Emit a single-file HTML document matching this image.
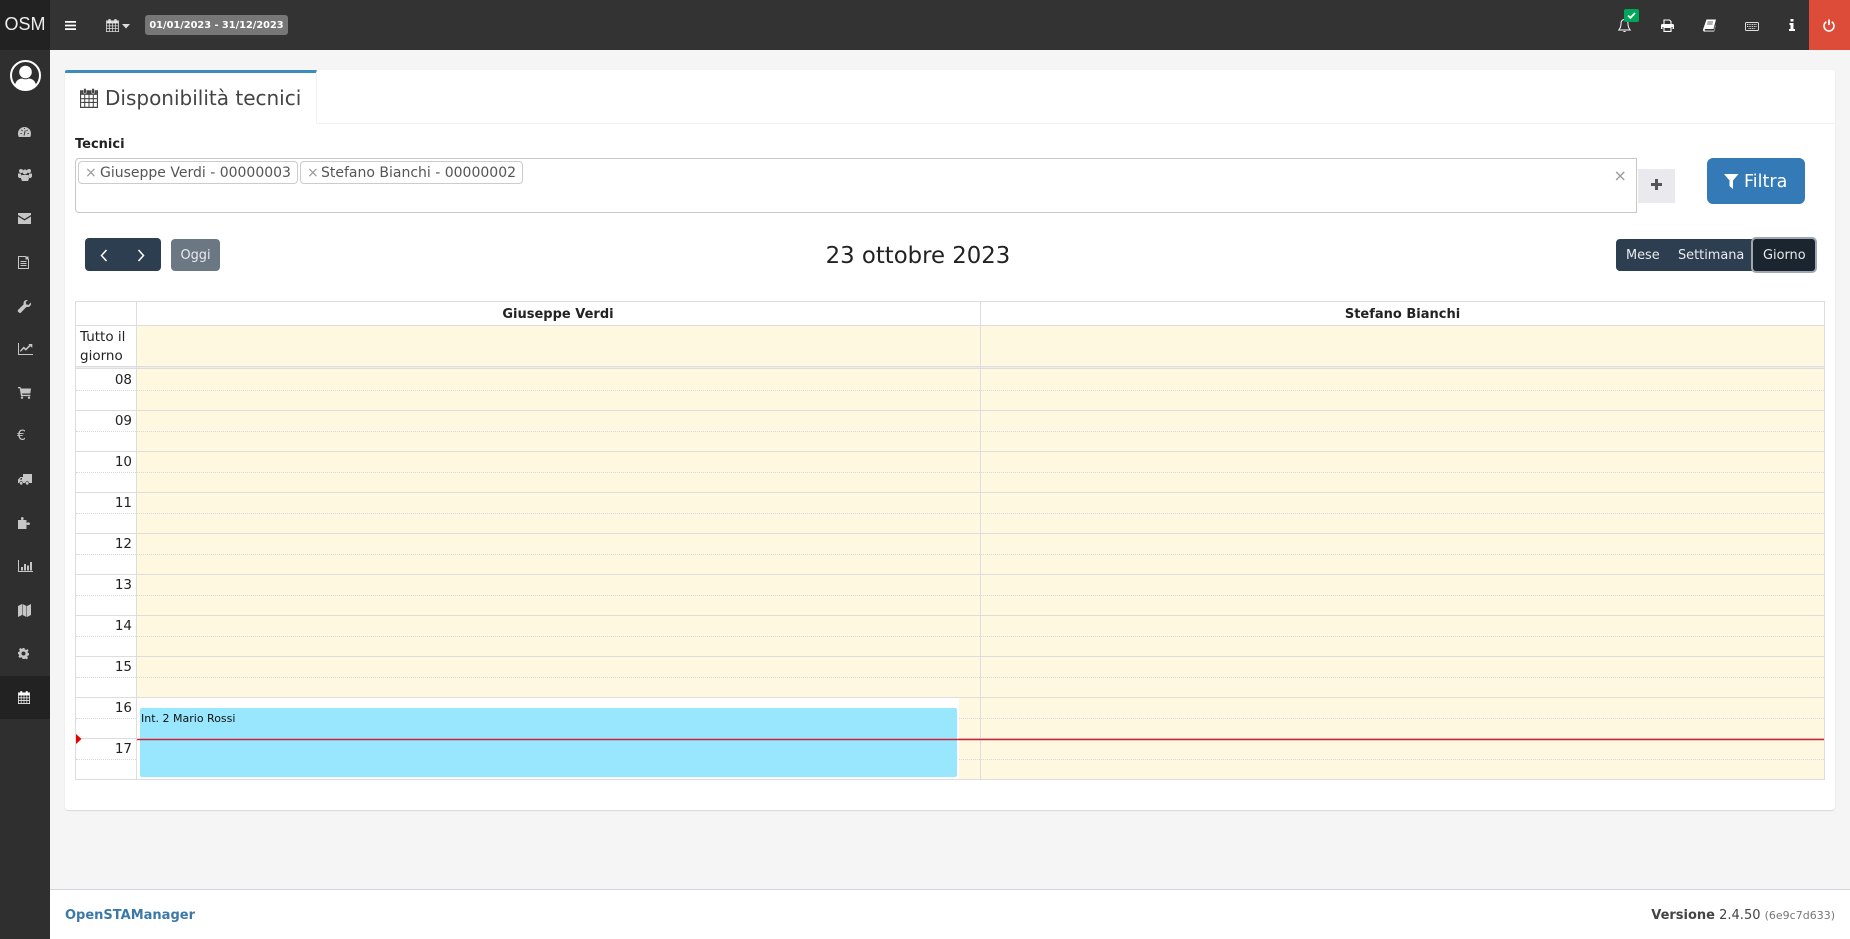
<!DOCTYPE html>
<html lang="it"><head><meta charset="utf-8"><title>Disponibilità tecnici</title>
<style>
*{box-sizing:border-box}
html,body{margin:0;padding:0;width:1850px;height:939px;overflow:hidden;background:#f5f5f5;font-family:"DejaVu Sans","Liberation Sans",sans-serif;color:#333}
.a{position:absolute}
.t{position:absolute;white-space:nowrap}
svg{position:absolute;display:block;overflow:visible}
.side{fill:#c6c6c6}
.h{position:absolute;left:76px;width:1748px;height:0;border-top:1px solid #ddd}
.d{position:absolute;left:76px;width:1748px;height:0;border-top:1px dotted #d8d8d8}
.lab{position:absolute;left:76px;width:56px;text-align:right;font-size:13.5px;color:#222;line-height:20px}
</style></head><body>
<svg width="0" height="0" style="position:absolute"><defs>
<symbol id="cal" viewBox="0 0 16 16" preserveAspectRatio="none"><path d="M.5 2.300h15v13.200H.5z" fill="none" stroke="currentColor" stroke-width="1"/><path d="M1 2.500h14v3H1z" fill="currentColor"/><path d="M3.200.4h2.300v3.900H3.200zM10.500.4h2.300v3.900h-2.300z" fill="currentColor" stroke="#fff" stroke-width=".4"/><path d="M1 8.500h14M1 11.500h14M4.200 5.500v10M8 5.500v10M11.800 5.500v10" stroke="currentColor" stroke-width=".9" fill="none"/></symbol>
</defs></svg>

<!-- header -->
<div class="a" style="left:0;top:0;width:1850px;height:50px;background:#333"></div>
<div class="a" style="left:0;top:0;width:50px;height:50px;background:#222"></div>
<div class="t" style="left:0;top:12px;width:50px;text-align:center;font:18px/24px 'Liberation Sans',sans-serif;color:#eee">OSM</div>
<svg style="left:65px;top:21px" width="11" height="9"><path d="M0 0h11v1.800H0zM0 3.600h11v1.800H0zM0 7.200h11V9H0z" fill="#fff"/></svg>
<svg style="left:106px;top:19px;color:#ddd" width="13" height="13"><use href="#cal"/></svg>
<svg style="left:122px;top:23.500px" width="8" height="5"><path d="M0 0h8L4 4.500z" fill="#ddd"/></svg>
<div class="a" style="left:145px;top:15px;width:143px;height:20px;background:#777;border-radius:3px"></div>
<div class="t" style="left:145px;top:15px;width:143px;height:20px;text-align:center;font-size:9.800px;font-weight:bold;line-height:21px;color:#fff">01/01/2023 - 31/12/2023</div>

<!-- header right -->
<svg style="left:1618px;top:18px" width="13" height="15" viewBox="0 0 13 15"><path d="M6.500 1.500C4 1.500 3 3.500 3 6c0 3-1 4.500-2.200 6h11.400C11 10.500 10 9 10 6c0-2.500-1-4.500-3.500-4.500z" fill="none" stroke="#fff" stroke-width="1"/><path d="M5 13a1.600 1.600 0 0 0 3 0z" fill="#fff"/></svg>
<div class="a" style="left:1624px;top:9px;width:15px;height:13px;background:#00a65a;border-radius:2px"></div>
<svg style="left:1627px;top:12px" width="9" height="7"><path d="M1 3.500l2.500 2.300L8 1" fill="none" stroke="#fff" stroke-width="1.800"/></svg>
<svg style="left:1661px;top:19px" width="13" height="13" viewBox="0 0 13 13"><path d="M3 5.500V1h5.500L10 2.500v3" fill="none" stroke="#fff" stroke-width="1.100"/><path d="M1.500 5h10A1.500 1.500 0 0 1 13 6.500V10h-1.500V8h-10v2H0V6.500A1.500 1.500 0 0 1 1.500 5z" fill="#fff"/><path d="M3 8.500h7v3.900H3z" fill="#333" stroke="#fff" stroke-width="1.100"/></svg>
<svg style="left:1703px;top:19px" width="13" height="13" viewBox="0 0 13 13"><path d="M3.500.500H13l-2.500 9.500H2.500c-1 0-1.200 1.600 0 1.600h8.500l1.500-6v1.500l-1.300 5.400H2C.5 13-.3 11.500.2 10z" fill="#fff"/><path d="M4.500 3h5.500M4 5h5.500" stroke="#333" stroke-width=".8"/></svg>
<svg style="left:1745px;top:22px" width="14" height="9" viewBox="0 0 14 9"><rect x=".5" y=".5" width="13" height="8" rx="1" fill="none" stroke="#ddd"/><path d="M2 2.500h10M2 4.500h10M3.500 6.500h7" stroke="#ddd" stroke-dasharray="1 .7" fill="none"/></svg>
<svg style="left:1789px;top:19px" width="6" height="12" viewBox="0 0 6 12"><path d="M1.500 0h3v2.500h-3zM.5 4h4v6H6v2H0v-2h1.500V6H.5z" fill="#fff"/></svg>
<div class="a" style="left:1809px;top:0;width:41px;height:50px;background:#dd4b39"></div>
<svg style="left:1823px;top:19px" width="12" height="13" viewBox="0 0 12 13"><path d="M3.300 2.800a5 5 0 1 0 5.400 0" fill="none" stroke="#fff" stroke-width="1.600"/><path d="M6 .500v5.500" stroke="#fff" stroke-width="1.800"/></svg>

<!-- sidebar -->
<div class="a" style="left:0;top:50px;width:50px;height:889px;background:#2f2f2f"></div>
<div class="a" style="left:0;top:676px;width:50px;height:43px;background:#222"></div>
<svg style="left:10px;top:60px" width="31" height="31" viewBox="0 0 31 31"><circle cx="15.500" cy="15.500" r="14.500" fill="none" stroke="#fff" stroke-width="2"/><circle cx="15.500" cy="12" r="6.300" fill="#fff"/><path d="M5 25c1-5 4.500-6.500 7.500-6.500 1 1 5 1 6 0 3 0 6.500 1.500 7.500 6.500a14.500 14.500 0 0 1-21 0z" fill="#fff"/></svg>
<svg class="side" style="left:18px;top:127px" width="13" height="10" viewBox="0 0 13 10"><path d="M6.500 0A6.500 6.500 0 0 1 13 6.500c0 1.200-.2 2.400-.8 3.500H.8C.2 8.900 0 7.700 0 6.500A6.500 6.500 0 0 1 6.500 0z"/><path d="M6 8.500l1.200-5M2.500 6.500h1.200M9.500 6.500h1.200M3.500 3l1 1M9.500 3l-1 1M6.500 1v1" stroke="#2f2f2f" stroke-width=".9"/></svg>
<svg class="side" style="left:18px;top:169px" width="14" height="12" viewBox="0 0 14 12"><circle cx="3" cy="2" r="2"/><circle cx="11" cy="2" r="2"/><circle cx="7" cy="3" r="2.500"/><path d="M0 4.500h3l.5 4.500H1L0 7.500zM14 4.500h-3l-.5 4.500H13l1-1.500zM3.500 6h7l.5 3.500-1 2.500H4L3 9.500z"/></svg>
<svg class="side" style="left:18px;top:213px" width="13" height="11" viewBox="0 0 13 11"><path d="M0 0h13v2L6.500 6 0 2zM0 3.500l6.500 4 6.500-4V11H0z"/></svg>
<svg style="left:18px;top:256px" width="11" height="13" viewBox="0 0 11 13"><path d="M.5.500h7l3 3v9H.500z" fill="none" stroke="#c6c6c6"/><path d="M7.500 .5h3v3h-3z" fill="#c6c6c6"/><path d="M2.500 5.500h6M2.500 7.500h6M2.500 9.500h6" stroke="#c6c6c6"/></svg>
<svg class="side" style="left:18px;top:300px" width="13" height="13" viewBox="0 0 13 13"><path d="M9 0c-2.500 0-4 2-3.300 4.300L0 10c-.4.500-.4 1.200 0 1.700l1.300 1c.5.400 1 .4 1.500 0l5.700-5.800C11 7.500 13 6 13 3.500l-.3-1L10.500 5 8 4.300 7.800 2 10 0z"/></svg>
<svg style="left:18px;top:343px" width="15" height="12" viewBox="0 0 15 12"><path d="M.5 0v11.500H15" fill="none" stroke="#c6c6c6"/><path d="M2.500 9l3.300-3.300 2 2 4.500-4.500 2 1.500V1h-4l1 1-3.500 3.500-2-2-3.700 4z" fill="#c6c6c6"/></svg>
<svg class="side" style="left:18px;top:387px" width="13" height="12" viewBox="0 0 13 12"><path d="M0 0h2.500l.4 1.500H13l-.7 5H4l.3 1.300h8v1.300H3L1.700 1.300H0z"/><circle cx="4" cy="10.700" r="1.200"/><circle cx="11" cy="10.700" r="1.200"/></svg>
<div class="t" style="left:17px;top:428px;font-size:14px;line-height:16px;color:#c6c6c6">€</div>
<svg class="side" style="left:18px;top:474px" width="14" height="11" viewBox="0 0 14 11"><path d="M5 0h9v9H11a1.800 1.800 0 0 0-3.600 0H5a1.800 1.800 0 0 0-3.600 0H0V5.500L2.500 3H5zM1.500 5.500H4V4H3z"/><circle cx="3.200" cy="9.300" r="1.400"/><circle cx="9.200" cy="9.300" r="1.400"/></svg>
<svg class="side" style="left:18px;top:517px" width="12" height="12" viewBox="0 0 12 12"><path d="M0 3h3.500C2.500 1.500 3 0 4.300 0s1.800 1.500.8 3H8.500v3c1.300-1 3.500-.8 3.500.7S9.800 8.500 8.500 7.500V12H0z"/></svg>
<svg style="left:18px;top:560px" width="15" height="12" viewBox="0 0 15 12"><path d="M.5 0v11.500H15" fill="none" stroke="#c6c6c6"/><path d="M3 7h2v3.500H3zM6 4h2v6.500H6zM9 5.500h2v5H9zM12 2h2v8.500h-2z" fill="#c6c6c6"/></svg>
<svg class="side" style="left:18px;top:604px" width="13" height="13" viewBox="0 0 13 13"><path d="M0 2l4-2v11l-4 2zM4.500 0l4 2v11l-4-2zM9 2l4-2v11l-4 2z"/></svg>
<svg class="side" style="left:18px;top:648px" width="11" height="11" viewBox="0 0 11 11"><path fill-rule="evenodd" d="M4.500 0h2l.3 1.500 1.300.5L9.400 1l1.100 1.500-1 1.200.5 1.300 1 .3v2l-1.300.3-.5 1.200.8 1.200-1.400 1.400-1.200-.8-1.200.5L6.500 11h-2l-.3-1.300L3 9.200l-1.200.8L.4 8.600l.8-1.200-.5-1.200L0 6V4l1.300-.3.5-1.200L1 1.300 2.400.0l1.200.9 1-.4zM5.500 3.500a2 2 0 1 0 0 4 2 2 0 0 0 0-4z"/></svg>
<svg style="left:18px;top:691px;color:#fff" width="12" height="13"><use href="#cal"/></svg>

<!-- box -->
<div class="a" style="left:65px;top:70px;width:1770px;height:740px;background:#fff;border-radius:3px;box-shadow:0 1px 1px rgba(0,0,0,.12)"></div>
<div class="a" style="left:65px;top:123px;width:1770px;height:1px;background:#f2f2f2"></div>
<div class="a" style="left:65px;top:70px;width:252px;height:54px;background:#fff;border-top:3px solid #3c8dbc;border-right:1px solid #f2f2f2;border-radius:2px 0 0 0"></div>
<svg style="left:80px;top:88px;color:#444" width="18" height="20"><use href="#cal"/></svg>
<div class="t" style="left:105px;top:86px;font-size:20px;line-height:24px;color:#444">Disponibilità tecnici</div>

<div class="t" style="left:75px;top:135.500px;font-size:13px;font-weight:bold;line-height:17px;color:#222">Tecnici</div>
<div class="a" style="left:75px;top:158px;width:1562px;height:55px;border:1px solid #c8c8c8;border-radius:4px 0 0 4px;background:#fff"></div>
<div class="a" style="left:78px;top:161px;width:220px;height:23px;border:1px solid #ccc;border-radius:4px"></div>
<div class="t" style="left:85px;top:162px;height:23px;line-height:23px;font-size:14px;color:#999">×</div>
<div class="t" style="left:100px;top:162px;height:23px;line-height:23px;font-size:14px;color:#555">Giuseppe Verdi - 00000003</div>
<div class="a" style="left:300px;top:161px;width:223px;height:23px;border:1px solid #ccc;border-radius:4px"></div>
<div class="t" style="left:307px;top:162px;height:23px;line-height:23px;font-size:14px;color:#999">×</div>
<div class="t" style="left:321px;top:162px;height:23px;line-height:23px;font-size:14px;color:#555">Stefano Bianchi - 00000002</div>
<div class="t" style="left:1613.500px;top:167px;font-size:16px;line-height:18px;color:#999">×</div>
<div class="a" style="left:1638px;top:169px;width:37px;height:34px;background:#e9e9ee"></div>
<svg style="left:1651px;top:179px" width="11" height="11"><path d="M4 0h3v4h4v3H7v4H4V7H0V4h4z" fill="#555"/></svg>
<div class="a" style="left:1707px;top:158px;width:98px;height:46px;background:#337ab7;border-radius:6px"></div>
<svg style="left:1724px;top:174px" width="15" height="15" viewBox="0 0 15 15"><path d="M0 0h14.500L9 6.500V15L5.500 12V6.500z" fill="#fff"/></svg>
<div class="t" style="left:1744px;top:168.500px;font-size:17.500px;line-height:26px;color:#fff">Filtra</div>

<!-- toolbar -->
<div class="a" style="left:85px;top:238px;width:76px;height:33px;background:#2c3e50;border-radius:4px"></div>
<svg style="left:100px;top:249px" width="8" height="13"><path d="M6.500 1L1.500 6.500l5 5.500" fill="none" stroke="#fff" stroke-width="1.500"/></svg>
<svg style="left:137px;top:249px" width="8" height="13"><path d="M1.500 1l5 5.500-5 5.500" fill="none" stroke="#fff" stroke-width="1.500"/></svg>
<div class="a" style="left:171px;top:239px;width:49px;height:32px;background:#6c7784;border-radius:4px"></div>
<div class="t" style="left:171px;top:240px;width:49px;height:32px;line-height:31px;text-align:center;font-size:12.900px;color:#fff;opacity:.85">Oggi</div>
<div class="t" style="left:618px;top:241px;width:600px;text-align:center;font-size:22.800px;line-height:30px;color:#222">23 ottobre 2023</div>
<div class="a" style="left:1616px;top:239px;width:199px;height:32px;background:#2c3e50;border-radius:4px"></div>
<div class="a" style="left:1753px;top:239px;width:62px;height:32px;background:#1a252f;border-radius:3px;box-shadow:0 0 0 2px #a0a7b0"></div>
<div class="t" style="left:1626px;top:240px;line-height:31px;font-size:12.900px;color:#fff;opacity:.9">Mese</div>
<div class="t" style="left:1678px;top:240px;line-height:31px;font-size:12.900px;color:#fff;opacity:.9">Settimana</div>
<div class="t" style="left:1763px;top:240px;line-height:31px;font-size:12.900px;color:#fff;opacity:.9">Giorno</div>

<!-- calendar -->
<div class="a" style="left:75px;top:301px;width:1750px;height:479px;border:1px solid #ddd;background:#fff"></div>
<div class="a" style="left:136px;top:326px;width:1688px;height:40px;background:#fff8e1"></div>
<div class="a" style="left:136px;top:369px;width:1688px;height:410px;background:#fff8e1"></div>
<div class="a" style="left:76px;top:325px;width:1748px;height:1px;background:#ddd"></div>
<div class="a" style="left:76px;top:366px;width:1748px;height:3px;background:#eee;border-top:1px solid #ddd;border-bottom:1px solid #ddd"></div>
<div class="t" style="left:136px;top:303px;width:844px;text-align:center;font-size:13px;font-weight:bold;line-height:24px;color:#222">Giuseppe Verdi</div>
<div class="t" style="left:981px;top:303px;width:843px;text-align:center;font-size:13px;font-weight:bold;line-height:24px;color:#222">Stefano Bianchi</div>
<div class="t" style="left:80px;top:328px;font-size:13.500px;line-height:19px;color:#222;white-space:normal;width:50px">Tutto il giorno</div>

<div class="h" style="top:410px"></div><div class="h" style="top:451px"></div><div class="h" style="top:492px"></div><div class="h" style="top:533px"></div><div class="h" style="top:574px"></div><div class="h" style="top:615px"></div><div class="h" style="top:656px"></div><div class="h" style="top:697px"></div><div class="h" style="top:738px"></div>
<div class="d" style="top:390px"></div><div class="d" style="top:431px"></div><div class="d" style="top:472px"></div><div class="d" style="top:513px"></div><div class="d" style="top:554px"></div><div class="d" style="top:595px"></div><div class="d" style="top:636px"></div><div class="d" style="top:677px"></div><div class="d" style="top:718px"></div><div class="d" style="top:759px"></div>
<div class="a" style="left:136px;top:301px;width:1px;height:478px;background:#ddd"></div>
<div class="a" style="left:980px;top:301px;width:1px;height:478px;background:#ddd"></div>
<div class="lab" style="top:370px">08</div><div class="lab" style="top:411px">09</div><div class="lab" style="top:452px">10</div><div class="lab" style="top:493px">11</div><div class="lab" style="top:534px">12</div><div class="lab" style="top:575px">13</div><div class="lab" style="top:616px">14</div><div class="lab" style="top:657px">15</div><div class="lab" style="top:698px">16</div><div class="lab" style="top:739px">17</div>

<div class="a" style="left:137px;top:698px;width:822px;height:81px;background:#fff"></div>
<div class="a" style="left:140px;top:708px;width:817px;height:69px;background:#99e6ff;border-radius:2px"></div>
<div class="t" style="left:141px;top:710.500px;font-size:11px;line-height:16px;color:#111">Int. 2 Mario Rossi</div>
<div class="a" style="left:137px;top:739px;width:1687px;height:1px;background:#c9202c"></div>
<div class="a" style="left:137px;top:738px;width:1687px;height:3px;background:rgba(220,40,50,.25)"></div>
<svg style="left:76px;top:734px" width="6" height="10"><path d="M0 0l5.500 5L0 10z" fill="#e60000"/></svg>

<!-- footer -->
<div class="a" style="left:0;top:889px;width:1850px;height:50px;background:#fff;border-top:1px solid #d2d6de"></div>
<div class="a" style="left:0;top:889px;width:50px;height:50px;background:#2f2f2f"></div>
<div class="t" style="left:65px;top:906.500px;font-size:13px;font-weight:bold;line-height:17px;color:#3c78a8">OpenSTAManager</div>
<div class="t" style="right:15px;top:906.500px;font-size:13px;line-height:17px;color:#444"><b>Versione</b> 2.4.50 <span style="font-size:11px;color:#777">(6e9c7d633)</span></div>
</body></html>
